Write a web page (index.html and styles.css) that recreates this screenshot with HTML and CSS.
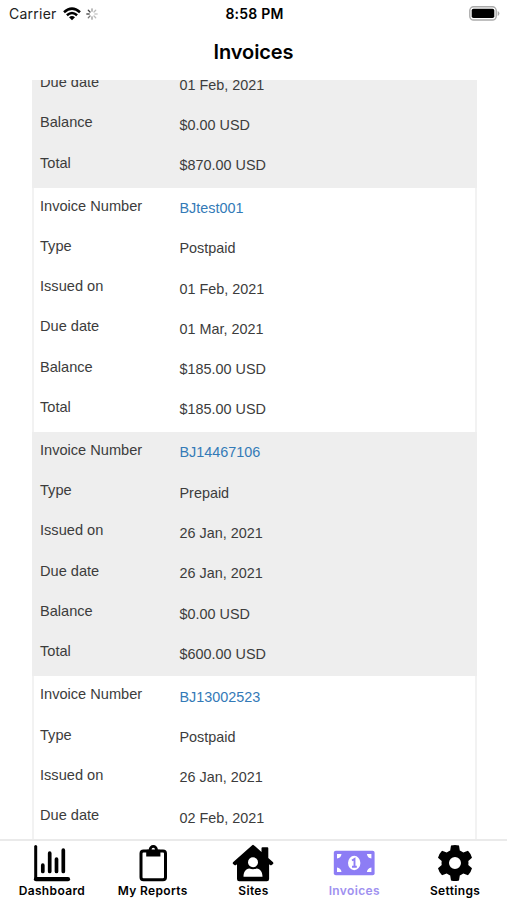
FILE: index.html
```html
<!DOCTYPE html>
<html lang="en">
<head>
<meta charset="utf-8">
<title>Invoices</title>
<link rel="stylesheet" href="styles.css">
</head>
<body>
<div class="status">
  <div class="carrier">
    <span>Carrier</span>
    <svg class="wifi" width="18" height="14" viewBox="0 0 18 14" fill="none" stroke="#000" stroke-width="2.5"><path d="M1 5.2Q9-2 17 5.2M3.9 8.3Q9 3.7 14.1 8.3"/><path d="M6 10.2Q9 7.8 12 10.2L9 13.3Z" fill="#000" stroke="none"/></svg>
    <svg class="spinner" width="12" height="12" viewBox="0 0 12 12" stroke-width="1.3" stroke-linecap="round"><path d="M6 .8v2.4" stroke="#999"/><path d="M9.7 2.3 8 4" stroke="#bbb"/><path d="M11.2 6H8.8" stroke="#ccc"/><path d="M9.7 9.7 8 8" stroke="#bbb"/><path d="M6 11.2V8.8" stroke="#999"/><path d="M2.3 9.7 4 8" stroke="#777"/><path d="M.8 6h2.4" stroke="#555"/><path d="M2.3 2.3 4 4" stroke="#444"/></svg>
  </div>
  <div class="time">8:58 PM</div>
  <svg class="battery" width="31" height="15" viewBox="0 0 31 15"><rect x=".8" y=".8" width="26.4" height="13.2" rx="3.8" fill="#fff" stroke="#aaa" stroke-width="1.4"/><rect x="2.7" y="2.7" width="22.6" height="9.4" rx="1.8"/><path d="M28.7 5v5q1.7-.7 1.7-2.5T28.7 5Z" fill="#aaa"/></svg>
</div>
<h1 class="title">Invoices</h1>
<main class="list">
  <dl class="card shaded">
    <dt>Invoice Number</dt><dd class="link">BJ14467213</dd>
    <dt>Type</dt><dd>Prepaid</dd>
    <dt>Issued on</dt><dd>01 Feb, 2021</dd>
    <dt>Due date</dt><dd>01 Feb, 2021</dd>
    <dt>Balance</dt><dd>$0.00 USD</dd>
    <dt>Total</dt><dd>$870.00 USD</dd>
  </dl>
  <dl class="card">
    <dt>Invoice Number</dt><dd class="link">BJtest001</dd>
    <dt>Type</dt><dd>Postpaid</dd>
    <dt>Issued on</dt><dd>01 Feb, 2021</dd>
    <dt>Due date</dt><dd>01 Mar, 2021</dd>
    <dt>Balance</dt><dd>$185.00 USD</dd>
    <dt>Total</dt><dd>$185.00 USD</dd>
  </dl>
  <dl class="card shaded">
    <dt>Invoice Number</dt><dd class="link">BJ14467106</dd>
    <dt>Type</dt><dd>Prepaid</dd>
    <dt>Issued on</dt><dd>26 Jan, 2021</dd>
    <dt>Due date</dt><dd>26 Jan, 2021</dd>
    <dt>Balance</dt><dd>$0.00 USD</dd>
    <dt>Total</dt><dd>$600.00 USD</dd>
  </dl>
  <dl class="card">
    <dt>Invoice Number</dt><dd class="link">BJ13002523</dd>
    <dt>Type</dt><dd>Postpaid</dd>
    <dt>Issued on</dt><dd>26 Jan, 2021</dd>
    <dt>Due date</dt><dd>02 Feb, 2021</dd>
  </dl>
</main>
<nav class="tabs">
  <a class="tab"><svg width="42" height="40" viewBox="0 0 42 40" fill="none" stroke="#000" stroke-linecap="round"><path d="M4.7 4.5V37" stroke-width="3"/><path d="M5 37.2H37" stroke-width="4.2"/><path d="M11.8 23.2v6.2M18.7 11.2v18.2M25.5 17v12.4M32.3 8.2v21.2" stroke-width="3.7"/></svg><span>Dashboard</span></a>
  <a class="tab"><svg width="42" height="40" viewBox="0 0 42 40"><rect x="9" y="9" width="24.5" height="28.7" rx="2.5" fill="none" stroke="#000" stroke-width="3"/><path fill-rule="evenodd" d="M14.2 14.5V8.7q0-1 1-1h1.5a4.6 4.6 0 0 1 9.2 0h1.5q1 0 1 1v5.8ZM21.3 5.8a1.7 1.7 0 1 0 0 3.4 1.7 1.7 0 0 0 0-3.4Z"/></svg><span>My Reports</span></a>
  <a class="tab"><svg width="42" height="40" viewBox="0 0 42 40"><path d="M20.2 3.2q.8-.7 1.6 0l7.7 6.7V6.2q0-1 1-1h4.8q1 0 1 1v9.9l4.5 4q1 1 .2 1.8l-1.3 1q-.8.6-1.7 0l-.9-.7V37q0 2.3-2.3 2.3H7.2Q5 39.300 5 37V22.200l-.9.7q-.9.6-1.7 0l-1.300-1q-.8-.8.2-1.800Z"/><circle cx="21" cy="20.300" r="5" fill="#fff"/><path d="M11.500 34.800c0-5.200 2.300-7.800 5.800-8.300q3.700 1.500 7.400 0c3.500.5 5.800 3.100 5.800 8.300Z" fill="#fff"/></svg><span>Sites</span></a>
  <a class="tab active"><svg width="42" height="40" viewBox="0 0 42 40"><rect x=".8" y="8.800" width="40.800" height="24.400" rx="2" fill="#8d7df5"/><path d="M4 12h4.500q-.5 4-4.500 4.500ZM38.400 12h-4.500q.5 4 4.500 4.500ZM4 30h4.500q-.5-4-4.500-4.500ZM38.400 30h-4.500q.5-4 4.500-4.500Z" fill="#fff"/><ellipse cx="21.200" cy="21" rx="6.200" ry="7.200" fill="#fff"/><path d="m19 18.500 2.500-1.500v7.500M19 24.700h4.800" fill="none" stroke="#8d7df5" stroke-width="1.900"/></svg><span>Invoices</span></a>
  <a class="tab"><svg width="42" height="40" viewBox="0 0 42 40"><path fill-rule="evenodd" d="M17 3.500q4-1.200 8 0l.8 5q2 .8 3.500 2l4.700-1.800q3 3 4 7l-3.700 3.200q.4 2.100 0 4.200l3.700 3.200q-1 4-4 7l-4.700-1.800q-1.500 1.200-3.500 2l-.8 5q-4 1.200-8 0l-.8-5q-2-.8-3.500-2L8 33.300q-3-3-4-7l3.700-3.200q-.4-2.100 0-4.200L4 15.700q1-4 4-7l4.700 1.800q1.500-1.200 3.500-2ZM21 15a6 6 0 1 0 0 12 6 6 0 0 0 0-12Z"/></svg><span>Settings</span></a>
</nav>
</body>
</html>
```
FILE: styles.css
```css
* { box-sizing: border-box; }
body {
  margin: 0;
  height: 900px;
  display: flex;
  flex-direction: column;
  overflow: hidden;
  background: #fff;
  color: #000;
  font-family: Inter, "Liberation Sans", sans-serif;
}
.status {
  height: 27px;
  flex: none;
  display: grid;
  grid-template-columns: 1fr auto 1fr;
  align-items: center;
  padding: 0 7px 0 9px;
  font-size: 14px;
}
.carrier { display: flex; align-items: center; gap: 6px; color: #222; letter-spacing: .25px; }
.spinner { margin-left: -1px; }
.time { font-weight: 600; letter-spacing: .2px; }
.battery { justify-self: end; }
.title {
  margin: 0;
  height: 53px;
  flex: none;
  text-align: center;
  font-size: 20px;
  line-height: 51px;
  font-weight: 600;
  letter-spacing: -.1px;
}
.list {
  flex: 1;
  min-height: 0;
  overflow: hidden;
  margin: 0 30.5px 0 31.5px;
}
.card {
  margin: 0;
  height: 244.4px;
  padding: 0 7px 0 6.5px;
  border: solid #f2f2f2;
  border-width: 0 2px;
  display: grid;
  grid-template-columns: 139.5px 1fr;
  grid-auto-rows: 40.3px;
  align-content: start;
  font: 14.6px/37px "Liberation Sans", sans-serif;
  color: #3c3c3c;
}
.card:first-child { margin-top: -136.9px; }
.shaded { background: #eee; border-color: #eee; }
dt, dd { margin: 0; white-space: nowrap; }
dd { padding-top: 2.5px; font-size: 14.4px; }
.link { color: #337ab7; }
.tabs {
  height: 61px;
  flex: none;
  display: grid;
  grid-template-columns: repeat(5, 100.8px);
  justify-content: center;
  border-top: 2px solid #eaeaea;
}
.tab {
  display: flex;
  flex-direction: column;
  align-items: center;
  padding-top: 1px;
  font-size: 12px;
  line-height: 17px;
  font-weight: 600;
  letter-spacing: .35px;
}
.active { color: #a091f0; }
```
